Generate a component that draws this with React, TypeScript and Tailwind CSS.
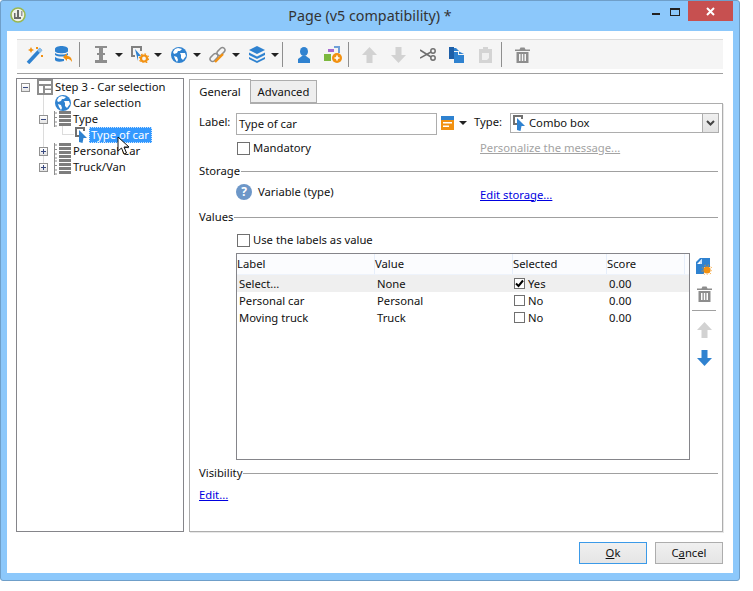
const Caret = () => <span className="w-0 h-0 border-x-[4px] border-x-transparent border-t-[4px] border-t-[#222]" />;

const Wand = () => (
  <svg width="18" height="18" viewBox="0 0 18 18">
    <path d="M2 17 L15 3" stroke="#2f82d0" strokeWidth="3.6" />
    <path d="M12.5 5.7 L15 3" stroke="#8fbfe8" strokeWidth="3.6" />
    <path d="M5 1 L6 3 L8 4 L6 5 L5 7 L4 5 L2 4 L4 3Z" fill="#f29111" />
    <rect x="15" y="9" width="2" height="2" fill="#f29111" />
    <rect x="10" y="1" width="2" height="2" fill="#f29111" />
  </svg>
);

const Db = () => (
  <svg width="18" height="17" viewBox="0 0 18 17">
    <path d="M0 3 C0 -1 13 -1 13 3 V5 C13 8 0 8 0 5Z" fill="#2f82d0" />
    <path d="M0 7 C3 9 10 9 13 7 V9 C10 11 3 11 0 9Z" fill="#2f82d0" />
    <path d="M0 11 C3 13 7 13 9 13 V15 C5 16 1 16 0 14Z" fill="#2f82d0" />
    <path d="M8 11 L12 7.5 V10 C15 10 17 12 17 16 C15.5 13.5 14 13 12 13 V15Z" fill="#f29111" />
  </svg>
);

const IBeam = () => (
  <svg width="12" height="17" viewBox="0 0 12 17" fill="#8d8d8d">
    <path d="M0 0 H12 V2 H8 V7 H10 V9 H8 V14 H12 V17 H0 V14 H4 V9 H2 V7 H4 V2 H0Z" />
  </svg>
);

const FormGear = () => (
  <svg width="18" height="17" viewBox="0 0 18 17">
    <path d="M0 0 H11 V5 H9 V2 H2 V9 H4 V11 H0Z" fill="#808080" />
    <path d="M4 3 L10 10 H7 L7 15Z" fill="#2f82d0" />
    <circle cx="13" cy="12.5" r="3" fill="none" stroke="#f29111" strokeWidth="2.2" />
    <circle cx="13" cy="12.5" r="4.6" fill="none" stroke="#f29111" strokeWidth="1.2" strokeDasharray="1.6 2" />
  </svg>
);

const Globe = ({ size = 16 }: { size?: number }) => (
  <svg width={size} height={size} viewBox="0 0 16 16">
    <circle cx="8" cy="8" r="8" fill="#2f82d0" />
    <path d="M7 1 L11 2 L9 4 L7 4 L6 6 L3 7 L2 5 L4 2Z" fill="#fff" />
    <path d="M9 6 L14 6 L15 9 L12 13 L10 11 L10 8Z" fill="#fff" />
    <path d="M3 9 L6 10 L7 13 L6 15 L4 12Z" fill="#fff" />
  </svg>
);

const LinkIcon = () => (
  <svg width="18" height="17" viewBox="0 0 18 17" fill="none">
    <rect x="0.5" y="9" width="9" height="5" rx="2.5" transform="rotate(-45 5 11.5)" stroke="#8d8d8d" strokeWidth="1.5" />
    <rect x="7.5" y="3" width="9" height="5" rx="2.5" transform="rotate(-45 12 5.5)" stroke="#8d8d8d" strokeWidth="1.5" />
    <path d="M6 16 L14 8" stroke="#f29111" strokeWidth="2.4" />
  </svg>
);

const Layers = () => (
  <svg width="16" height="17" viewBox="0 0 16 17" fill="#2f82d0">
    <path d="M8 0 L16 4 L8 8 L0 4Z" />
    <path d="M0 6.5 L8 10.5 L16 6.5 V9 L8 13 L0 9Z" />
    <path d="M0 11 L8 15 L16 11 V13 L8 17 L0 13Z" />
  </svg>
);

const Person = () => (
  <svg width="14" height="16" viewBox="0 0 14 16" fill="#2f82d0">
    <ellipse cx="7" cy="4.5" rx="4" ry="4.5" />
    <path d="M5 9 H9 L13 12 V16 H1 V12Z" />
  </svg>
);

const Shapes = () => (
  <svg width="18" height="17" viewBox="0 0 18 17">
    <rect x="4" y="3" width="6" height="3" fill="#a56ad0" />
    <path d="M10 0 H16 V7 H14 V2 H10Z" fill="#6f9fd8" />
    <rect x="0" y="8" width="7" height="7" fill="#7cb83e" />
    <circle cx="13" cy="12" r="5" fill="#f29111" />
    <path d="M10.5 12 H15.5 M13 9.5 V14.5" stroke="#fff" strokeWidth="1.6" />
  </svg>
);

const Arrow = ({ down, color }: { down?: boolean; color: string }) => (
  <svg width="15" height="16" viewBox="0 0 15 16" fill={color}>
    <path d={down ? "M4.5 0 H10.5 V8 H15 L7.5 16 L0 8 H4.5Z" : "M7.5 0 L15 8 H10.5 V16 H4.5 V8 H0Z"} />
  </svg>
);

const Scissors = () => (
  <svg width="16" height="13" viewBox="0 0 16 13" fill="none" stroke="#6f6f6f" strokeWidth="1.5">
    <circle cx="13" cy="3" r="2.2" />
    <circle cx="13" cy="10" r="2.2" />
    <path d="M11 4 L0 10 M11 9 L0 2" />
  </svg>
);

const Copy = () => (
  <svg width="15" height="16" viewBox="0 0 15 16">
    <path d="M0 0 H5 V12 H0Z" fill="#1d5fa8" />
    <path d="M5 1 H7 L10 4 H5Z" fill="#2f82d0" />
    <path d="M5 5 H9 V8 H15 V16 H5Z" fill="#2f82d0" />
    <path d="M10 4.5 L15 7 H10Z" fill="#2f82d0" />
  </svg>
);

const Paste = () => (
  <svg width="13" height="16" viewBox="0 0 13 16">
    <path d="M0 2 H4 V0 H9 V2 H13 V16 H0Z" fill="#d4d4d4" />
    <path d="M3 6 H10 V11 L8 13 H3Z" fill="#f0f0f0" />
  </svg>
);

const Trash = () => (
  <svg width="15" height="16" viewBox="0 0 15 16" fill="#8d8d8d">
    <path d="M0 2.5 H4.5 L5.5 0.5 H9.5 L10.5 2.5 H15 V4 H0Z" />
    <path fillRule="evenodd" d="M1.5 5 H13.5 V16 H1.5Z M4 7 V14 H5.5 V7Z M6.8 7 V14 H8.2 V7Z M9.5 7 V14 H11 V7Z" />
  </svg>
);

const NewValue = () => (
  <svg width="16" height="17" viewBox="0 0 16 17">
    <path d="M4 0 H14 V9 H8 V16 H0 V4Z" fill="#2f82d0" />
    <path d="M6 1 V6 H1Z" fill="#fff" />
    <path d="M6 1 L6 6 L4 6 L4 3Z" fill="#cfe3f7" />
    <circle cx="11" cy="12" r="3.6" fill="#f29111" />
    <circle cx="11" cy="12" r="5" fill="none" stroke="#f29111" strokeWidth="1" strokeDasharray="1.2 2.2" />
  </svg>
);

const AppIcon = () => (
  <svg width="16" height="16" viewBox="0 0 16 16">
    <circle cx="8" cy="8" r="7" fill="#f1f1ea" stroke="#9ab84f" strokeWidth="1.6" />
    <path d="M4 6 V12 H11 V10 H9 V3 H7 V10 H5.5 V6Z" fill="#6a6a6a" />
    <rect x="11" y="4" width="1.5" height="5" fill="#9a9a9a" />
  </svg>
);

const PageIcon = () => (
  <svg width="16" height="16" viewBox="0 0 16 16">
    <path fillRule="evenodd" d="M0 0 H16 V16 H0Z M2 2 V5 H14 V2Z M2 7 V14 H6 V7Z M8 7 V9.5 H14 V7Z M8 11 V14 H14 V11Z" fill="#8d8d8d" />
  </svg>
);

const ListIcon = () => (
  <svg width="17" height="16" viewBox="0 0 17 16">
    <path d="M0.5 0 V16" stroke="#8d8d8d" />
    <path d="M0 2 H3 M0 6.5 H3 M0 11 H3 M0 15 H3" stroke="#8d8d8d" />
    <path d="M5 0 H17 V3 H5Z M5 4 H17 V7 H5Z M5 8 H17 V11 H5Z M5 12 H17 V15 H5Z" fill="#7d7d7d" />
  </svg>
);

const ComboIcon = () => (
  <svg width="13" height="16" viewBox="0 0 13 16">
    <path d="M0 0 H10 V4 H8 V2 H2 V8 H4 V10 H0Z" fill="#707070" />
    <path d="M4 3 L12 11 H8.5 L7.5 16 L4 15Z" fill="#2f82d0" />
  </svg>
);

const Expander = ({ open }: { open?: boolean }) => (
  <span className="relative flex w-[9px] h-[9px] items-center justify-center border border-[#919191] bg-[linear-gradient(#ffffff,#e4e4e4)]">
    <span className="w-[5px] h-px bg-[#3a4a80]" />
    {!open && <span className="absolute w-px h-[5px] bg-[#3a4a80]" />}
  </span>
);

const Checkbox = ({ checked, small }: { checked?: boolean; small?: boolean }) => (
  <span className={small
    ? "flex w-[11px] h-[11px] shrink-0 items-center justify-center border border-[#707070] bg-white"
    : "flex w-[13px] h-[13px] shrink-0 items-center justify-center border border-[#707070] bg-white"}>
    {checked && (
      <svg width="9" height="9" viewBox="0 0 9 9" fill="none" stroke="#000" strokeWidth="2">
        <path d="M1 4.5 L3.5 7 L8 1.5" />
      </svg>
    )}
  </span>
);

const Section = ({ title, className }: { title: string; className: string }) => (
  <div className={`flex items-center h-[14px] pl-[9px] pr-[4px] ${className}`}>
    <span>{title}</span>
    <span className="flex-1 h-px ml-[1px] bg-[#a0a0a0]" />
  </div>
);

const Sep = () => <span className="w-px h-[25px] ml-px mr-[6px] bg-[#8f8f8f] shrink-0" />;

const Tool = ({ children }: { children: React.ReactNode }) => (
  <span className="flex w-[29px] items-center justify-center shrink-0">{children}</span>
);

const DropTool = ({ children }: { children: React.ReactNode }) => (
  <span className="flex w-[39px] items-center shrink-0">
    <Tool>{children}</Tool>
    <Caret />
  </span>
);

const rows = [
  { label: 'Select...', value: 'None', selected: true },
  { label: 'Personal car', value: 'Personal', selected: false },
  { label: 'Moving truck', value: 'Truck', selected: false },
];

export default function App() {
  return (
    <div className="w-[753px] h-[591px] bg-white text-[11.25px] leading-[14px] text-[#111] font-['Noto_Sans',sans-serif] overflow-hidden">
      <div className="flex flex-col w-[740px] h-[581px] bg-[#8cc8fb] border border-[#6f9fc9] rounded-[3px] px-[6px] pb-[7px]">
        {/* title bar */}
        <div className="relative flex h-[30px] shrink-0 items-center justify-center">
          <span className="absolute left-[3px] top-[6px]"><AppIcon /></span>
          <span className="text-[14.3px] leading-[20px] text-[#333] pb-[1px]">Page (v5 compatibility) *</span>
          <div className="absolute right-0 top-0 flex items-start">
            <span className="mt-[12px] mr-[10px] w-[8px] h-[2px] bg-[#222]" />
            <span className="mt-[7px] mr-[8px] w-[10px] h-[8px] border border-t-2 border-[#222]" />
            <span className="flex w-[45px] h-[20px] items-center justify-center bg-[#c75050]">
              <svg width="9" height="9" viewBox="0 0 9 9" stroke="#fff" strokeWidth="2">
                <path d="M1 1 L8 8 M8 1 L1 8" />
              </svg>
            </span>
          </div>
        </div>

        {/* dialog body */}
        <div className="flex flex-col flex-1 min-h-0 bg-white">
          <div className="flex items-center h-[30px] mt-[8px] mx-[10px] pl-[3px] bg-[#f5f5f5] border-t border-[#dcdcdc]">
            <Tool><Wand /></Tool>
            <Tool><Db /></Tool>
            <Sep />
            <DropTool><IBeam /></DropTool>
            <DropTool><FormGear /></DropTool>
            <DropTool><Globe /></DropTool>
            <DropTool><LinkIcon /></DropTool>
            <DropTool><Layers /></DropTool>
            <Sep />
            <Tool><Person /></Tool>
            <Tool><Shapes /></Tool>
            <Sep />
            <Tool><Arrow color="#d2d2d2" /></Tool>
            <Tool><Arrow down color="#d2d2d2" /></Tool>
            <Tool><Scissors /></Tool>
            <Tool><Copy /></Tool>
            <Tool><Paste /></Tool>
            <Sep />
            <Tool><Trash /></Tool>
          </div>
          <div className="h-px mt-[4px] mx-[10px] bg-[#a0a0a0]" />

          <div className="flex mt-[4px] ml-[9px]">
            {/* tree */}
            <div className="relative w-[168px] h-[454px] border border-[#85858a]">
              <span className="absolute left-[26px] top-[14px] w-px h-[74px] bg-[#dcdcdc]" />
              <span className="absolute left-[45px] top-[46px] w-px h-[10px] bg-[#dcdcdc]" />
              <span className="absolute left-[45px] top-[55px] w-[12px] h-px bg-[#dcdcdc]" />
              <div className="relative flex items-center h-[16px] pl-[4px]">
                <Expander open />
                <span className="w-[7px]" />
                <PageIcon />
                <span className="ml-[2px]">Step 3 - Car selection</span>
              </div>
              <div className="relative flex items-center h-[16px] pl-[38px]">
                <Globe />
                <span className="ml-[2px]">Car selection</span>
              </div>
              <div className="relative flex items-center h-[16px] pl-[22px]">
                <Expander open />
                <span className="w-[6px]" />
                <ListIcon />
                <span className="ml-[2px]">Type</span>
              </div>
              <div className="relative flex items-center h-[16px] pl-[58px]">
                <ComboIcon />
                <span className="ml-[1px] pl-[1px] w-[63px] h-[16px] bg-[#3399ff] text-white border border-dotted border-[#cfe6ff] leading-[14px] text-nowrap">Type of car</span>
              </div>
              <div className="relative flex items-center h-[16px] pl-[22px]">
                <Expander />
                <span className="w-[6px]" />
                <ListIcon />
                <span className="ml-[2px]">Personal Car</span>
              </div>
              <div className="relative flex items-center h-[16px] pl-[22px]">
                <Expander />
                <span className="w-[6px]" />
                <ListIcon />
                <span className="ml-[2px]">Truck/Van</span>
              </div>
              {/* mouse pointer over the selected node */}
              <svg className="absolute left-[100px] top-[57px]" width="15" height="21" viewBox="0 0 15 21">
                <path d="M1 1 L1 15 L4.5 12 L7 18 L9.5 17 L7 11 L12 11Z" fill="#fff" stroke="#111" strokeWidth="1" />
              </svg>
            </div>

            {/* tabs */}
            <div className="flex flex-col w-[534px] h-[454px] ml-[5px]">
              <div className="flex items-end h-[25px] shrink-0">
                <span className="relative z-10 -mb-px flex w-[62px] h-[25px] items-center justify-center border border-b-0 border-[#adadad] bg-white">General</span>
                <span className="flex w-[67px] h-[23px] -ml-px items-center justify-center border border-[#adadad] bg-[#eeeeee]">Advanced</span>
              </div>
              <div className="flex flex-col flex-1 border border-[#adadad] shadow-[1px_1px_0_#e8e8e8]">
                <div className="flex mt-[9px] h-[22px]">
                  <span className="w-[46px] pl-[9px] pt-[2px] shrink-0">Label:</span>
                  <span className="flex w-[201px] h-[22px] items-center pl-[2px] border border-[#adadad]">Type of car</span>
                  <span className="flex items-center ml-[4px] mb-[2px] gap-[5px]">
                    <svg width="13" height="14" viewBox="0 0 13 14">
                      <rect width="13" height="14" fill="#f29111" />
                      <rect width="13" height="4" fill="#2f82d0" />
                      <rect x="2" y="6" width="9" height="1.5" fill="#fff" />
                      <rect x="2" y="9.5" width="6" height="1.5" fill="#fff" />
                    </svg>
                    <Caret />
                  </span>
                  <span className="ml-[7px] w-[36px] pt-[2px]">Type:</span>
                  <div className="flex w-[209px] h-[20px] border border-[#adadad] items-center">
                    <span className="ml-[2px]"><ComboIcon /></span>
                    <span className="ml-[3px] flex-1">Combo box</span>
                    <span className="flex w-[16px] h-full items-center justify-center border-l border-[#adadad] bg-[linear-gradient(#f0f0f0,#e2e2e2)]">
                      <svg width="9" height="6" viewBox="0 0 9 6" fill="none" stroke="#444" strokeWidth="2">
                        <path d="M1 1 L4.5 4.5 L8 1" />
                      </svg>
                    </span>
                  </div>
                </div>
                <div className="flex items-center h-[14px] mt-[6px]">
                  <span className="ml-[47px]"><Checkbox /></span>
                  <span className="ml-[3px] w-[227px]">Mandatory</span>
                  <span className="underline text-[#a3a3a3]">Personalize the message...</span>
                </div>
                <Section title="Storage" className="mt-[9px]" />
                <div className="flex items-center h-[16px] mt-[6px]">
                  <span className="flex ml-[46px] w-[16px] h-[16px] items-center justify-center rounded-full bg-[#6d97c8] text-white text-[12px] font-bold">?</span>
                  <span className="ml-[6px] w-[222px]">Variable (type)</span>
                  <span className="underline text-[#0000e0] mt-[5px]">Edit storage...</span>
                </div>
                <Section title="Values" className="mt-[10px]" />
                <div className="flex items-center h-[14px] mt-[9px]">
                  <span className="ml-[47px]"><Checkbox /></span>
                  <span className="ml-[3px]">Use the labels as value</span>
                </div>
                <div className="flex mt-[6px] ml-[46px]">
                  <div className="w-[454px] h-[207px] border border-[#85858a]">
                    <div className="flex h-[21px] items-center bg-[#fbfcfe] border-b border-[#eef3fb]">
                      <span className="w-[138px] h-full flex items-center border-r border-[#e6eefa]">Label</span>
                      <span className="w-[138px] h-full flex items-center border-r border-[#e6eefa]">Value</span>
                      <span className="w-[94px] h-full flex items-center border-r border-[#e6eefa]">Selected</span>
                      <span className="w-[78px] h-full flex items-center border-r border-[#e6eefa]">Score</span>
                    </div>
                    {rows.map((row, i) => (
                      <div key={row.label} className={i === 0 ? "flex h-[17px] items-center bg-[#efefef]" : "flex h-[17px] items-center"}>
                        <span className="w-[138px] pl-[2px]">{row.label}</span>
                        <span className="w-[138px] pl-[2px]">{row.value}</span>
                        <span className="flex w-[94px] items-center pl-[1px]">
                          <Checkbox checked={row.selected} small />
                          <span className="ml-[3px]">{row.selected ? 'Yes' : 'No'}</span>
                        </span>
                        <span className="pl-[2px]">0.00</span>
                      </div>
                    ))}
                  </div>
                  <div className="flex flex-col items-center w-[28px] pt-[5px]">
                    <NewValue />
                    <span className="mt-[11px]"><Trash /></span>
                    <span className="w-[24px] h-px mt-[8px] bg-[#a0a0a0]" />
                    <span className="mt-[11px]"><Arrow color="#d2d2d2" /></span>
                    <span className="mt-[12px]"><Arrow down color="#2f82d0" /></span>
                  </div>
                </div>
                <Section title="Visibility" className="mt-[6px]" />
                <div className="mt-[8px] pl-[9px]">
                  <span className="underline text-[#0000e0]">Edit...</span>
                </div>
              </div>
            </div>
          </div>

          <div className="flex justify-end gap-[8px] mt-[10px] mr-[10px]">
            <button type="button" className="w-[68px] h-[22px] border border-[#3b9ae8] bg-[linear-gradient(#f0f0f0,#e5e5e5)]">
              <span className="underline">O</span>k
            </button>
            <button type="button" className="w-[68px] h-[22px] border border-[#adadad] bg-[linear-gradient(#f0f0f0,#e5e5e5)]">
              C<span className="underline">a</span>ncel
            </button>
          </div>
        </div>
      </div>
    </div>
  );
}
